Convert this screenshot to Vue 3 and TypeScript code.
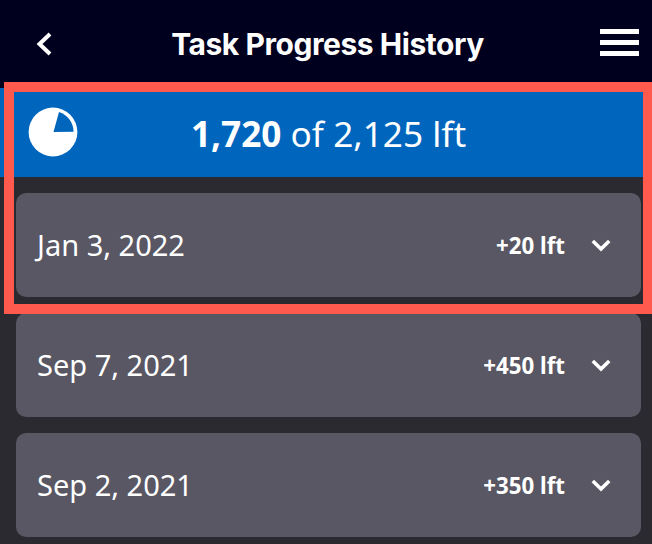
<script setup lang="ts">
interface Entry {
  date: string
  delta: string
}

const entries: Entry[] = [
  { date: 'Jan 3, 2022', delta: '+20 lft' },
  { date: 'Sep 7, 2021', delta: '+450 lft' },
  { date: 'Sep 2, 2021', delta: '+350 lft' },
]
</script>

<template>
  <div class="screen">
    <header class="topbar">
      <svg class="back" width="18" height="26" viewBox="0 0 18 26">
        <path d="M15 3 L4.5 13 L15 23" fill="none" stroke="#fff" stroke-width="4" />
      </svg>
      <h1 class="title">Task Progress History</h1>
      <div class="burger"><span></span><span></span><span></span></div>
    </header>

    <section class="summary">
      <svg class="pie" width="50" height="50" viewBox="0 0 50 50">
        <circle cx="25" cy="25" r="24.4" fill="#fff" />
        <path d="M25.5 25 L31 5 A21 21 0 0 1 45.6 24.7 Z" fill="#0065bd" />
      </svg>
      <p class="total"><strong>1,720</strong> of 2,125 lft</p>
    </section>

    <ul class="list">
      <li v-for="e in entries" :key="e.date" class="row">
        <span class="date">{{ e.date }}</span>
        <span class="delta">{{ e.delta }}</span>
        <svg class="chev" width="20" height="14" viewBox="0 0 20 14">
          <path d="M1.8 3 L10 11 L18.2 3" fill="none" stroke="#fff" stroke-width="3.6" />
        </svg>
      </li>
    </ul>

    <div class="highlight"></div>
  </div>
</template>

<style>
html,
body {
  background: #2b2a30;
}
</style>

<style scoped>
.screen {
  position: relative;
  width: 652px;
  height: 544px;
  overflow: hidden;
  background: #2b2a30;
  font-family: "Noto Sans", sans-serif;
  color: #fff;
}
.topbar {
  height: 88px;
  background: #00001e;
  display: flex;
  align-items: center;
  justify-content: space-between;
  padding: 0 13px 0 35px;
  box-sizing: border-box;
}
.back {
  display: block;
}
.title {
  margin: 0 0 0 2px;
  font-family: Inter, sans-serif;
  font-size: 30px;
  font-weight: 700;
  letter-spacing: -0.45px;
  line-height: 1;
}
.burger {
  width: 39px;
  margin-bottom: 3px;
  display: flex;
  flex-direction: column;
  gap: 6px;
}
.burger span {
  display: block;
  height: 5px;
  background: #fff;
}
.summary {
  position: relative;
  height: 89px;
  background: #0065bd;
  display: flex;
  align-items: center;
  justify-content: center;
}
.pie {
  position: absolute;
  left: 28px;
  top: 19px;
}
.total {
  margin: 3px 0 0 5px;
  font-size: 35.2px;
  line-height: 1;
}
.total strong {
  font-weight: 700;
}
.list {
  list-style: none;
  margin: 0;
  padding: 16px 11px 0 16px;
  display: flex;
  flex-direction: column;
  gap: 16px;
}
.row {
  height: 104px;
  box-sizing: border-box;
  background: #585763;
  border-radius: 10px;
  display: flex;
  align-items: center;
  padding: 0 30px 0 21px;
}
.date {
  flex: 1;
  font-size: 29px;
  margin-top: -2px;
}
.delta {
  font-size: 22.3px;
  font-weight: 700;
  margin-right: 26px;
}
.chev {
  display: block;
}
.highlight {
  position: absolute;
  left: 4px;
  top: 82px;
  width: 649px;
  height: 232px;
  box-sizing: border-box;
  border: 10px solid #ff5a4d;
}
</style>
